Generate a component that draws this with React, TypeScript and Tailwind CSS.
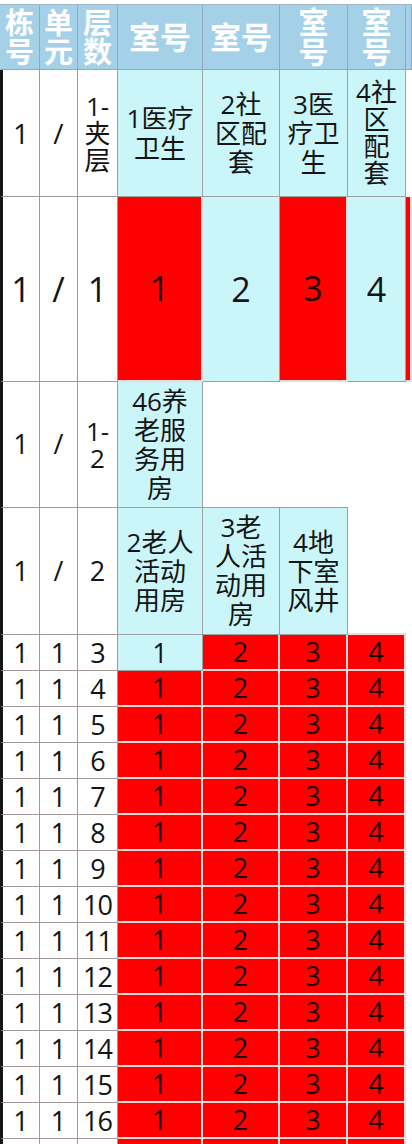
import type { ReactNode } from 'react';

// column widths, left to right (border-box)
const W = ['w-[40px]', 'w-[38px]', 'w-[40px]', 'w-[85px]', 'w-[77px]', 'w-[68px]', 'w-[58px]', 'flex-1'];

type Tone = 'head' | 'white' | 'cyan' | 'red' | 'blank';

const TONE: Record<Tone, string> = {
  head: 'bg-[#a5d1e8] border-r border-b border-[#8eaabb] text-white font-bold',
  white: 'bg-white border-r border-b border-[#a49898] text-[#141414]',
  cyan: 'bg-[#cbf6f9] border-r border-b border-[#9aa2a4] text-[#141414]',
  red: 'bg-[#ff0000] border-r-2 border-b-2 border-[#f0dada] text-[#1c0000]',
  blank: 'bg-white',
};

function Cell({
  i,
  tone,
  text = 'text-[26px] leading-[29px]',
  edge = false,
  children,
}: {
  i: number;
  tone: Tone;
  text?: string;
  edge?: boolean;
  children?: ReactNode;
}) {
  return (
    <div
      className={`${W[i]} ${TONE[tone]} ${text} ${
        edge ? 'border-l-[3px] border-l-[#161616]' : ''
      } shrink-0 flex items-center justify-center text-center overflow-visible whitespace-nowrap`}
    >
      <div>{children}</div>
    </div>
  );
}

function Lines({ items }: { items: string[] }) {
  return (
    <>
      {items.map((t, k) => (
        <div key={k}>{t}</div>
      ))}
    </>
  );
}

function DataRow({ floor }: { floor: number }) {
  const first = floor === 3;
  const num = 'text-[27px] leading-[30px]';
  return (
    <div className="flex h-[36px]">
      <Cell i={0} tone="white" edge text={num}>1</Cell>
      <Cell i={1} tone="white" text={num}>1</Cell>
      <Cell i={2} tone="white" text="text-[27px] leading-[30px] tracking-[-1px]">{floor}</Cell>
      <Cell i={3} tone={first ? 'cyan' : 'red'} text={num}>1</Cell>
      <Cell i={4} tone="red" text={num}>2</Cell>
      <Cell i={5} tone="red" text={num}>3</Cell>
      <Cell i={6} tone="red" text={num}>4</Cell>
      <Cell i={7} tone="blank" />
    </div>
  );
}

export default function App() {
  const floors = Array.from({ length: 16 }, (_, k) => k + 3);
  const headStack = 'text-[29px] leading-[29px]';

  return (
    <div className="w-[412px] bg-white pt-[4px] font-['Open_Sans','Noto_Sans_CJK_SC',sans-serif] overflow-hidden">
      {/* header */}
      <div className="flex h-[66px] border-t border-[#9fb4c0]">
        <Cell i={0} tone="head" text={headStack}><Lines items={['栋', '号']} /></Cell>
        <Cell i={1} tone="head" text={headStack}><Lines items={['单', '元']} /></Cell>
        <Cell i={2} tone="head" text={headStack}><Lines items={['层', '数']} /></Cell>
        <Cell i={3} tone="head" text="text-[31px] leading-[32px]">室号</Cell>
        <Cell i={4} tone="head" text="text-[31px] leading-[32px]">室号</Cell>
        <Cell i={5} tone="head" text="text-[30px] leading-[30px]"><Lines items={['室', '号']} /></Cell>
        <Cell i={6} tone="head" text="text-[30px] leading-[30px]"><Lines items={['室', '号']} /></Cell>
        <Cell i={7} tone="head" />
      </div>

      {/* 1 / 1-夹层 */}
      <div className="flex h-[127px]">
        <Cell i={0} tone="white" edge text="text-[28px]">1</Cell>
        <Cell i={1} tone="white" text="text-[28px]">/</Cell>
        <Cell i={2} tone="white" text="text-[26px] leading-[27px]"><Lines items={['1-', '夹', '层']} /></Cell>
        <Cell i={3} tone="cyan" text="text-[26px] leading-[30px]"><Lines items={['1医疗', '卫生']} /></Cell>
        <Cell i={4} tone="cyan" text="text-[26px] leading-[29px]"><Lines items={['2社', '区配', '套']} /></Cell>
        <Cell i={5} tone="cyan" text="text-[26px] leading-[29px]"><Lines items={['3医', '疗卫', '生']} /></Cell>
        <Cell i={6} tone="cyan" text="text-[26px] leading-[27px]"><Lines items={['4社', '区', '配', '套']} /></Cell>
        <Cell i={7} tone="blank" />
      </div>

      {/* 1 / 1 */}
      <div className="flex h-[185px]">
        <Cell i={0} tone="white" edge text="text-[34px]">1</Cell>
        <Cell i={1} tone="white" text="text-[34px]">/</Cell>
        <Cell i={2} tone="white" text="text-[34px]">1</Cell>
        <Cell i={3} tone="red" text="text-[34px]">1</Cell>
        <Cell i={4} tone="cyan" text="text-[34px]">2</Cell>
        <Cell i={5} tone="red" text="text-[34px]">3</Cell>
        <Cell i={6} tone="cyan" text="text-[34px]">4</Cell>
        <Cell i={7} tone="red" />
      </div>

      {/* 1 / 1-2 */}
      <div className="flex h-[126px]">
        <Cell i={0} tone="white" edge text="text-[27px]">1</Cell>
        <Cell i={1} tone="white" text="text-[27px]">/</Cell>
        <Cell i={2} tone="white" text="text-[26px] leading-[27px]"><Lines items={['1-', '2']} /></Cell>
        <Cell i={3} tone="cyan"><Lines items={['46养', '老服', '务用', '房']} /></Cell>
        <div className="w-[77px] shrink-0 border-b border-[#a49898]" />
        <div className="w-[68px] shrink-0 border-b border-[#a49898]" />
        <div className="flex-1" />
      </div>

      {/* 1 / 2 */}
      <div className="flex h-[127px]">
        <Cell i={0} tone="white" edge text="text-[27px]">1</Cell>
        <Cell i={1} tone="white" text="text-[27px]">/</Cell>
        <Cell i={2} tone="white" text="text-[27px]">2</Cell>
        <Cell i={3} tone="cyan"><Lines items={['2老人', '活动', '用房']} /></Cell>
        <Cell i={4} tone="cyan"><Lines items={['3老', '人活', '动用', '房']} /></Cell>
        <Cell i={5} tone="cyan"><Lines items={['4地', '下室', '风井']} /></Cell>
        <div className="w-[58px] shrink-0 border-b-2 border-[#f0dada]" />
        <div className="flex-1" />
      </div>

      {floors.map((f) => (
        <DataRow key={f} floor={f} />
      ))}
    </div>
  );
}
